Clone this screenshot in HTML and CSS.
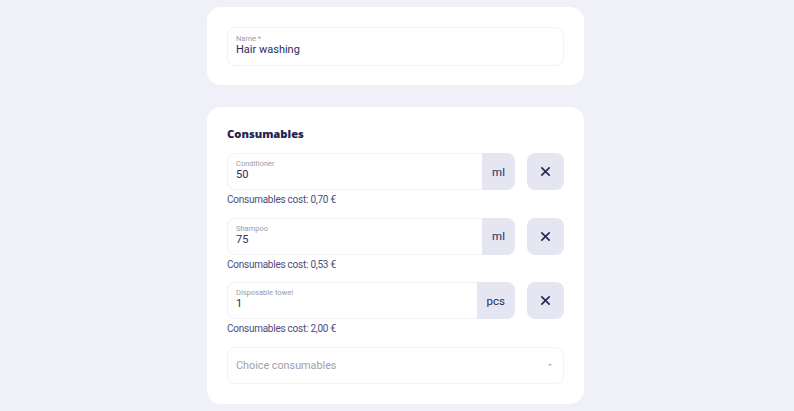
FILE: index.html
```html
<!DOCTYPE html>
<html>
<head>
<meta charset="utf-8">
<link rel="stylesheet" href="styles.css">
</head>
<body>
<div class="page">
  <div class="column">
    <section class="card card-name">
      <div class="field">
        <div class="label">Name *</div>
        <div class="value">Hair washing</div>
      </div>
    </section>
    <section class="card card-cons">
      <h2 class="title">Consumables</h2>
      <div class="item">
        <div class="row">
          <div class="field grow">
            <div class="label">Conditioner</div>
            <div class="value">50</div>
          </div>
          <div class="unit">ml</div>
          <button class="remove"><svg viewBox="0 0 12 12" width="11" height="11"><path d="M2 2L10 10M10 2L2 10" stroke="#2b2b5c" stroke-width="1.9" stroke-linecap="round"/></svg></button>
        </div>
        <div class="cost">Consumables cost: 0,70 €</div>
      </div>
      <div class="item">
        <div class="row">
          <div class="field grow">
            <div class="label">Shampoo</div>
            <div class="value">75</div>
          </div>
          <div class="unit">ml</div>
          <button class="remove"><svg viewBox="0 0 12 12" width="11" height="11"><path d="M2 2L10 10M10 2L2 10" stroke="#2b2b5c" stroke-width="1.9" stroke-linecap="round"/></svg></button>
        </div>
        <div class="cost">Consumables cost: 0,53 €</div>
      </div>
      <div class="item">
        <div class="row">
          <div class="field grow">
            <div class="label">Disposable towel</div>
            <div class="value">1</div>
          </div>
          <div class="unit">pcs</div>
          <button class="remove"><svg viewBox="0 0 12 12" width="11" height="11"><path d="M2 2L10 10M10 2L2 10" stroke="#2b2b5c" stroke-width="1.9" stroke-linecap="round"/></svg></button>
        </div>
        <div class="cost">Consumables cost: 2,00 €</div>
      </div>
      <div class="select">
        <span class="placeholder">Choice consumables</span>
        <span class="caret"></span>
      </div>
    </section>
  </div>
</div>
</body>
</html>
```
FILE: styles.css
```css
* { box-sizing: border-box; }
html, body { margin: 0; padding: 0; }
body {
  background: #f0f0f8;
  font-family: Roboto, "Noto Sans", sans-serif;
  color: #2b2b5c;
}
.page {
  display: flex;
  justify-content: center;
  padding: 7px 3px 0 0;
}
.column {
  width: 377px;
  display: flex;
  flex-direction: column;
  gap: 22px;
}
.card {
  background: #fff;
  border-radius: 14px;
  padding: 20px;
}
.card-name { padding: 20px 20px 19px; }
.field {
  height: 39px;
  border: 1px solid #f2f2f7;
  border-radius: 8px;
  padding: 7px 8px 0;
  background: #fff;
}
.label {
  font-size: 7.5px;
  color: #9b9ba8;
  line-height: 8px;
}
.value {
  font-size: 11px;
  line-height: 14px;
  color: #2b2b5c;
}
.title {
  margin: 0;
  font-family: "Open Sans", sans-serif;
  font-size: 11.2px;
  font-weight: 800;
  line-height: 13px;
  color: #24244f;
}
.item { margin-top: 13px; }
.item + .item { margin-top: 10.5px; }
.row {
  display: flex;
  align-items: stretch;
  height: 37px;
}
.row .field {
  height: 37px;
  border-radius: 8px 0 0 8px;
  border-right: none;
  padding-top: 6px;
}
.grow { flex: 1; }
.unit {
  background: #e6e6f3;
  border-radius: 0 8px 8px 0;
  display: flex;
  align-items: center;
  padding: 0 10px;
  font-size: 11.5px;
  color: #2b2b5c;
}
.remove {
  margin-left: 12px;
  width: 37px;
  height: 37px;
  border: none;
  border-radius: 8px;
  background: #e6e6f3;
  display: flex;
  align-items: center;
  justify-content: center;
  padding: 0;
}
.cost {
  margin-top: 3px;
  font-size: 10px;
  letter-spacing: -0.25px;
  line-height: 14px;
  color: #4d4d7c;
}
.select {
  margin-top: 10.5px;
  height: 37px;
  border: 1px solid #f2f2f7;
  border-radius: 8px;
  display: flex;
  align-items: center;
  justify-content: space-between;
  padding: 0 10px 0 8px;
}
.placeholder {
  font-size: 10.8px;
  color: #a0a0ac;
}
.caret {
  width: 0; height: 0;
  border-left: 2px solid transparent;
  border-right: 2px solid transparent;
  border-top: 2px solid #b0b0ba;
  margin-right: 1px;
}
```
